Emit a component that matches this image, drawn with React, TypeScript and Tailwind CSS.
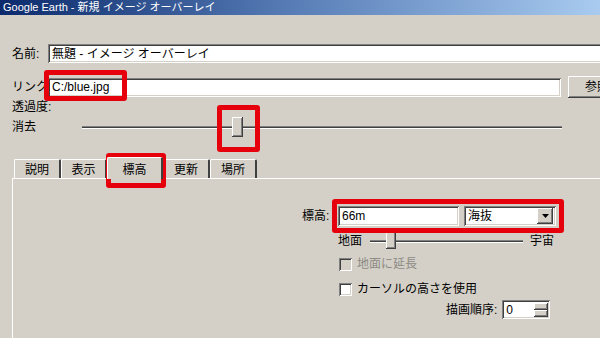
import React from 'react'

const FONT = { fontFamily: '"Liberation Sans", "Noto Sans CJK JP", sans-serif' }

const sunken =
  'bg-white shadow-[inset_1px_1px_0_#808080,inset_-1px_-1px_0_#ffffff,inset_2px_2px_0_#404040,inset_-2px_-2px_0_#d4d0c8]'
const raised =
  'bg-[#d4d0c8] shadow-[inset_-1px_-1px_0_#404040,inset_1px_1px_0_#ffffff,inset_-2px_-2px_0_#808080,inset_2px_2px_0_#d4d0c8]'

function Thumb({ className }: { className: string }) {
  return <div className={`absolute ${raised} ${className}`} />
}

function Checkbox({ label, disabled }: { label: string; disabled?: boolean }) {
  return (
    <div className="flex items-center h-[16px]">
      <div className={`shrink-0 w-[13px] h-[13px] ${disabled ? 'bg-[#d4d0c8]' : 'bg-white'} shadow-[inset_1px_1px_0_#808080,inset_-1px_-1px_0_#ffffff,inset_2px_2px_0_#404040,inset_-2px_-2px_0_#d4d0c8]`} />
      <span className={`ml-[5px] text-[12px] leading-none ${disabled ? 'text-[#8c8a84]' : 'text-black'}`}>{label}</span>
    </div>
  )
}

function RedBox({ className }: { className: string }) {
  return <div className={`absolute border-[5px] border-[#e5000b] rounded-[3px] pointer-events-none ${className}`} />
}

const TABS = [
  { label: '説明', w: 'w-[47px]' },
  { label: '表示', w: 'w-[46px]' },
  { label: '標高', w: 'w-[56px]' },
  { label: '更新', w: 'w-[47px]' },
  { label: '場所', w: 'w-[47px]' },
]

export default function App() {
  return (
    <div className="relative w-[600px] h-[338px] overflow-hidden bg-[#d4d0c8] text-black" style={FONT}>
      {/* Title bar */}
      <div className="h-[15px] bg-gradient-to-r from-[#0c2a6c] via-[#5a7fb8] to-[#a9cbf0] flex items-center pl-[3px]">
        <span className="text-white text-[11px] leading-none">Google Earth - 新規 イメージ オーバーレイ</span>
      </div>

      <div className="pl-[12px] pt-[29px]">
        {/* Name */}
        <div className="flex items-center h-[19px]">
          <span className="shrink-0 w-[36px] text-[12px] leading-none">名前:</span>
          <div className={`shrink-0 w-[600px] h-[19px] ${sunken} flex items-center pl-[4px]`}>
            <span className="text-[12px] leading-none">無題 - イメージ オーバーレイ</span>
          </div>
        </div>

        {/* Link */}
        <div className="flex items-center h-[22px] mt-[13px]">
          <span className="shrink-0 w-[36px] text-[12px] leading-none whitespace-nowrap">リンク:</span>
          <div className={`shrink-0 w-[513px] h-[19px] ${sunken} flex items-center pl-[4px]`}>
            <span className="text-[12px] leading-none">C:/blue.jpg</span>
          </div>
          <div className={`shrink-0 ml-[7px] w-[80px] h-[22px] ${raised} flex items-center pl-[17px]`}>
            <span className="text-[12px] leading-none whitespace-nowrap">参照...</span>
          </div>
        </div>

        {/* Transparency */}
        <div className="mt-[2px] text-[12px] leading-[14px]">透過度:</div>
        <div className="relative flex items-center h-[20px] mt-[3px]">
          <span className="shrink-0 w-[70px] text-[12px] leading-none">消去</span>
          <div className="shrink-0 w-[480px] h-[3px] border-t border-[#808080] border-b border-b-white bg-[#404040]" />
          <Thumb className="left-[220px] top-0 w-[11px] h-[20px]" />
        </div>

        {/* Tabs */}
        <div className="flex items-end h-[22px] mt-[19px] pl-[2px]">
          {TABS.map((t) => {
            const active = t.label === '標高'
            return (
              <div
                key={t.label}
                className={`shrink-0 flex items-center justify-center pt-[2px] text-[12px] leading-none border-t border-l border-white border-r-2 border-r-[#404040] rounded-t-[2px] ${t.w} ${
                  active ? 'h-[22px] -mb-[1px] relative z-10 bg-[#d4d0c8]' : 'h-[19px]'
                }`}
              >
                {t.label}
              </div>
            )
          })}
        </div>

        {/* Panel */}
        <div className="border-t border-l border-white h-[200px] w-[620px]">
          <div className="pl-[325px] pt-[27px]">
            <div className="flex items-center h-[20px] -ml-[36px]">
              <span className="shrink-0 w-[36px] text-[12px] leading-none">標高:</span>
              <div className={`shrink-0 w-[121px] h-[20px] ${sunken} flex items-center pl-[4px]`}>
                <span className="text-[12px] leading-none">66m</span>
              </div>
              <div className={`shrink-0 ml-[5px] w-[92px] h-[20px] ${sunken} flex items-center pl-[4px] pr-[3px] justify-between`}>
                <span className="text-[12px] leading-none">海抜</span>
                <div className={`w-[16px] h-[16px] ${raised} flex items-center justify-center`}>
                  <svg width="7" height="4" viewBox="0 0 7 4"><path d="M0 0h7L3.5 4z" fill="#000" /></svg>
                </div>
              </div>
            </div>

            <div className="relative flex items-center h-[18px] mt-[6px]">
              <span className="shrink-0 w-[32px] text-[12px] leading-none">地面</span>
              <div className="shrink-0 w-[153px] h-[3px] border-t border-[#808080] border-b border-b-white bg-[#404040]" />
              <span className="shrink-0 ml-[7px] text-[12px] leading-none">宇宙</span>
              <Thumb className="left-[48px] -top-[1px] h-[18px] w-[10px]" />
            </div>

            <div className="mt-[6px] ml-[1px]">
              <Checkbox label="地面に延長" disabled />
            </div>
            <div className="mt-[9px] ml-[1px]">
              <Checkbox label="カーソルの高さを使用" />
            </div>

            <div className="flex items-center h-[19px] mt-[3px] pl-[108px]">
              <span className="shrink-0 text-[12px] leading-none mr-[5px]">描画順序:</span>
              <div className={`shrink-0 w-[48px] h-[19px] ${sunken} flex items-center pl-[4px] pr-[2px] justify-between`}>
                <span className="text-[12px] leading-none">0</span>
                <div className="flex flex-col">
                  <div className={`w-[14px] h-[7px] ${raised}`} />
                  <div className={`w-[14px] h-[7px] ${raised}`} />
                </div>
              </div>
            </div>
          </div>
        </div>
      </div>

      {/* Red highlight boxes */}
      <RedBox className="left-[44px] top-[70px] w-[83px] h-[31px]" />
      <RedBox className="left-[217px] top-[105px] w-[43px] h-[47px]" />
      <RedBox className="left-[106px] top-[153px] w-[60px] h-[35px]" />
      <RedBox className="left-[332px] top-[199px] w-[232px] h-[34px]" />
    </div>
  )
}
